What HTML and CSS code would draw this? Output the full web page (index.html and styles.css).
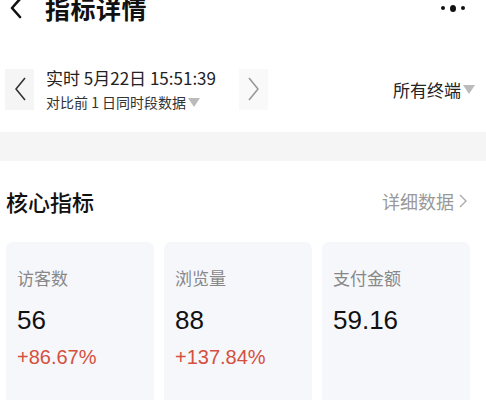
FILE: index.html
```html
<!DOCTYPE html>
<html lang="zh">
<head>
<meta charset="utf-8">
<link rel="stylesheet" href="styles.css">
</head>
<body>
<div class="page">
  <header class="topbar">
    <svg class="back" width="14" height="22" viewBox="0 0 14 22"><path d="M11 2 L3 11 L11 20" fill="none" stroke="#111" stroke-width="2.6" stroke-linecap="round" stroke-linejoin="round"/></svg>
    <h1 class="title">指标详情</h1>
    <div class="more"><span class="dot s"></span><span class="dot b"></span><span class="dot s"></span></div>
  </header>

  <div class="daterow">
    <div class="navbtn">
      <svg width="14" height="26" viewBox="0 0 14 26"><path d="M12 2 L3 13 L12 24" fill="none" stroke="#333" stroke-width="1.6" stroke-linejoin="round"/></svg>
    </div>
    <div class="dateinfo">
      <div class="dt">实时 5月22日 15:51:39</div>
      <div class="cmp">对比前 1 日同时段数据<span class="tri"></span></div>
    </div>
    <div class="navbtn light">
      <svg width="14" height="26" viewBox="0 0 14 26"><path d="M2 2 L11 13 L2 24" fill="none" stroke="#999" stroke-width="1.6" stroke-linejoin="round"/></svg>
    </div>
    <div class="terminal">所有终端<span class="tri"></span></div>
  </div>

  <div class="band"></div>

  <div class="sechead">
    <h2 class="sectitle">核心指标</h2>
    <div class="detail">详细数据<svg width="10" height="16" viewBox="0 0 10 16"><path d="M2 2 L8 8 L2 14" fill="none" stroke="#aaa" stroke-width="1.4"/></svg></div>
  </div>

  <div class="cards">
    <div class="card">
      <div class="label">访客数</div>
      <div class="value">56</div>
      <div class="pct">+86.67%</div>
    </div>
    <div class="card">
      <div class="label">浏览量</div>
      <div class="value">88</div>
      <div class="pct">+137.84%</div>
    </div>
    <div class="card">
      <div class="label">支付金额</div>
      <div class="value">59.16</div>
      <div class="pct"></div>
    </div>
  </div>
</div>
</body>
</html>
```

FILE: styles.css
```css
html, body {
  margin: 0;
  padding: 0;
  background: #fff;
}
body {
  font-family: "Noto Sans CJK SC", "Noto Sans", sans-serif;
  color: #111;
  width: 486px;
  height: 400px;
  overflow: hidden;
}
.page {
  display: flex;
  flex-direction: column;
}
.topbar {
  display: flex;
  align-items: center;
  height: 34px;
  margin-top: -9px;
  padding: 0 21px 0 9px;
}
.back {
  flex: none;
}
.title {
  margin: 0 0 0 22px;
  font-size: 25px;
  font-weight: 700;
  line-height: 34px;
  letter-spacing: 0.5px;
  flex: 1;
}
.more {
  display: flex;
  align-items: center;
  gap: 5px;
}
.dot {
  display: block;
  border-radius: 50%;
  background: #111;
}
.dot.s { width: 4px; height: 4px; }
.dot.b { width: 6px; height: 7px; }

.daterow {
  display: flex;
  align-items: center;
  margin-top: 40px;
  padding: 0 11px 0 5px;
  height: 48px;
}
.navbtn {
  width: 29px;
  height: 41px;
  background: #f5f5f5;
  display: flex;
  align-items: center;
  justify-content: center;
  flex: none;
}
.navbtn.light {
  background: #f9f9f9;
}
.dateinfo {
  margin-left: 12px;
  width: 193px;
  display: flex;
  flex-direction: column;
  gap: 3px;
}
.dt {
  font-size: 17px;
  line-height: 23px;
  color: #222;
}
.cmp {
  font-size: 14px;
  line-height: 20px;
  color: #333;
  display: flex;
  align-items: center;
}
.tri {
  display: inline-block;
  width: 0;
  height: 0;
  border-left: 6px solid transparent;
  border-right: 6px solid transparent;
  border-top: 9px solid #bbb;
  margin-left: 2px;
}
.terminal {
  margin-left: auto;
  font-size: 17px;
  color: #222;
  display: flex;
  align-items: center;
}
.band {
  height: 29px;
  background: #f5f5f5;
  margin-top: 19px;
}
.sechead {
  display: flex;
  align-items: center;
  justify-content: space-between;
  height: 34px;
  margin-top: 23px;
  padding: 0 18px 0 6px;
}
.sectitle {
  margin: 0;
  font-size: 22px;
  font-weight: 500;
  line-height: 34px;
}
.detail {
  display: flex;
  align-items: center;
  gap: 4px;
  font-size: 18px;
  color: #999;
}
.cards {
  display: grid;
  grid-template-columns: repeat(3, 148px);
  gap: 10px;
  padding: 0 6px;
  margin-top: 24px;
}
.card {
  background: #f6f7fb;
  border-radius: 7px;
  height: 170px;
  padding: 24px 11px 0;
  box-sizing: border-box;
}
.label {
  font-size: 17px;
  line-height: 24px;
  color: #888;
}
.value {
  font-family: "Liberation Sans", "Noto Sans", sans-serif;
  font-size: 26px;
  line-height: 34px;
  margin-top: 13px;
  color: #111;
}
.pct {
  font-family: "Liberation Sans", "Noto Sans", sans-serif;
  font-size: 20px;
  line-height: 28px;
  margin-top: 6px;
  color: #d4503e;
}
```
